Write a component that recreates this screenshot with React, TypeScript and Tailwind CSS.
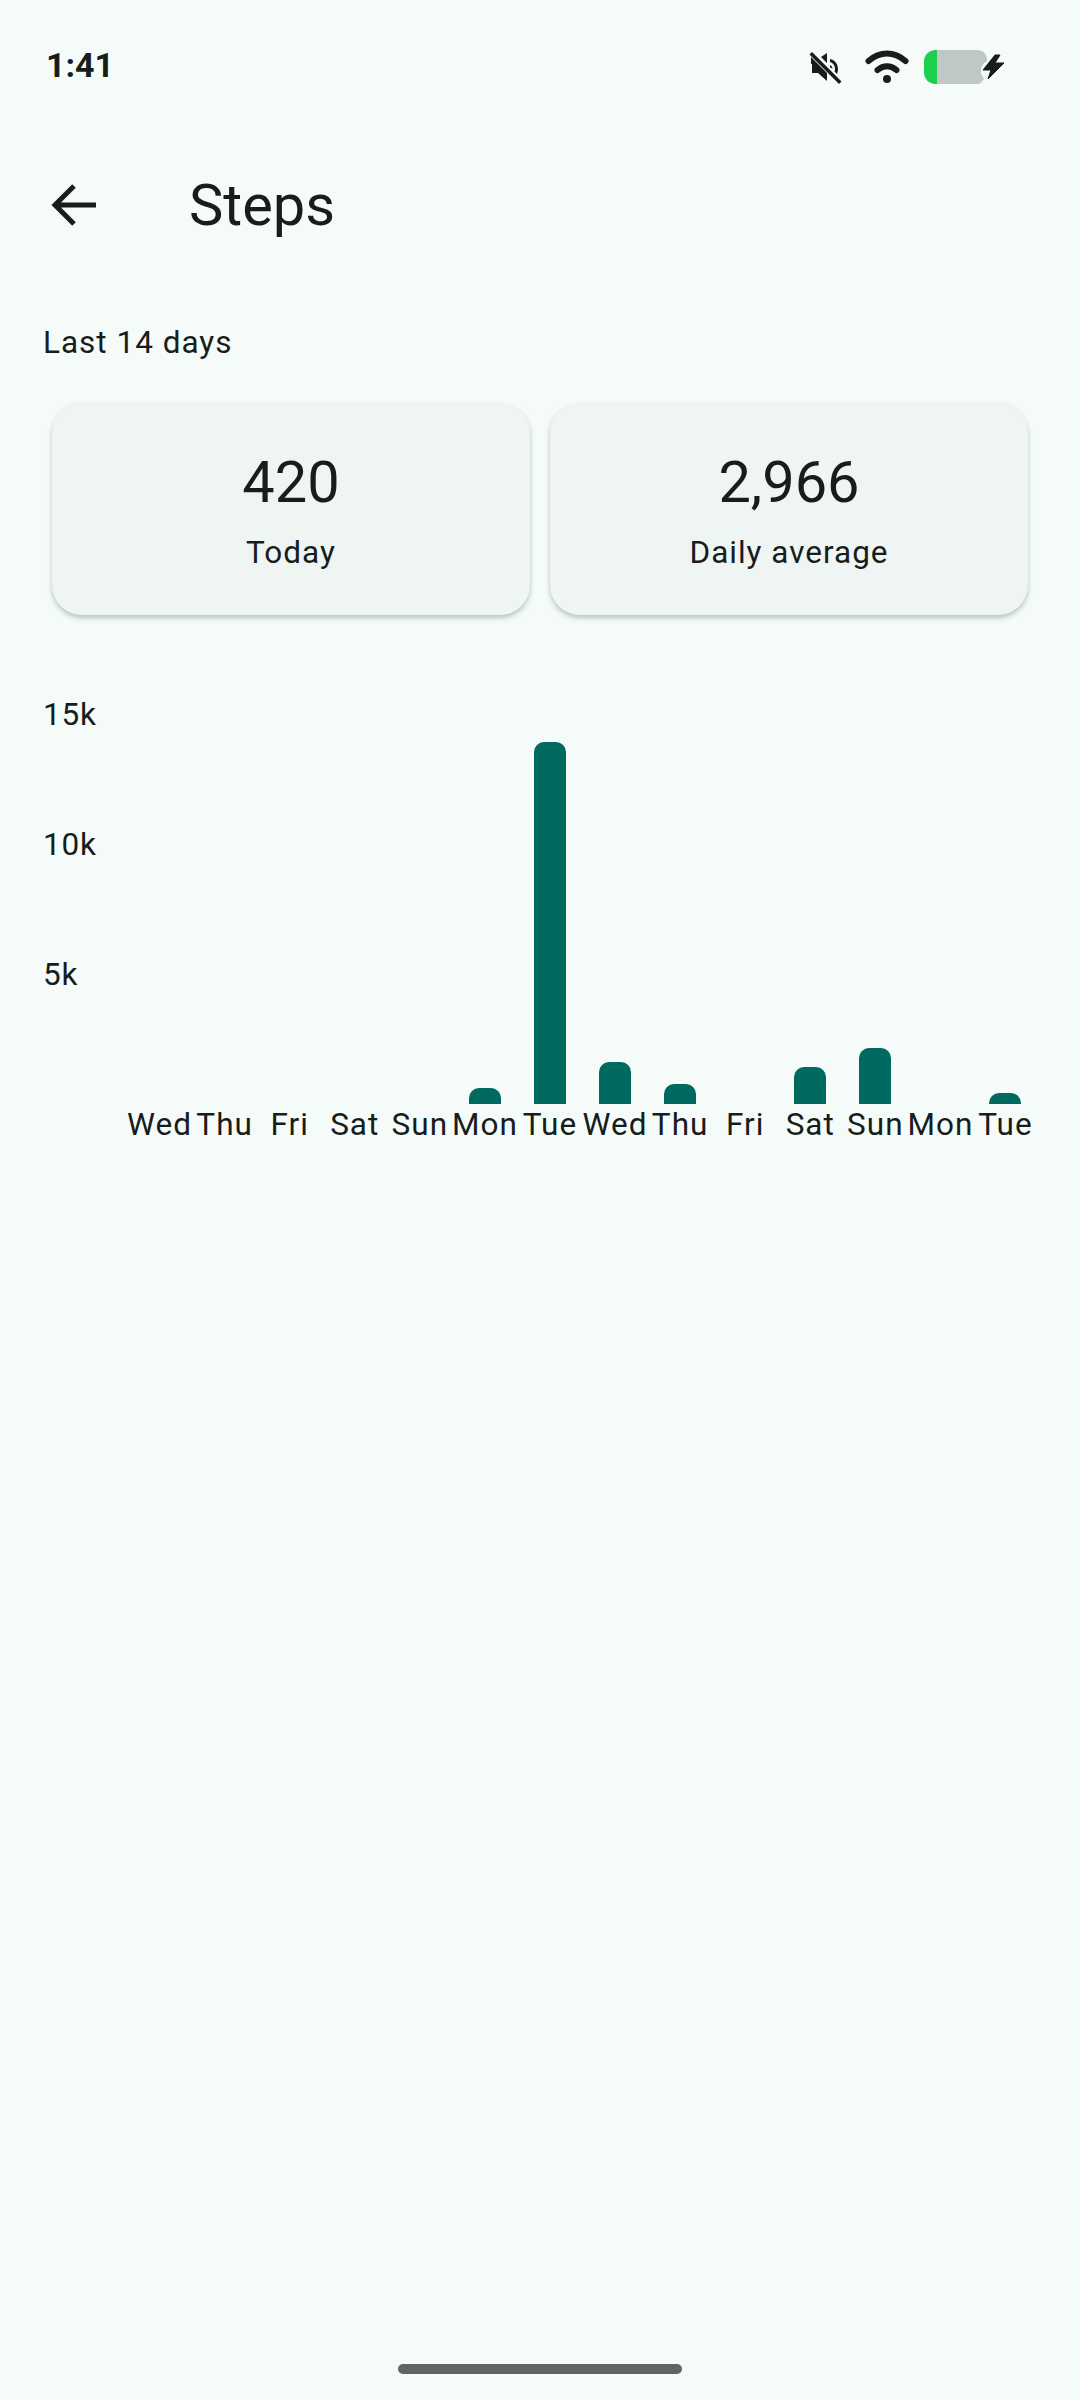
import React from 'react';

const days = [
  { label: 'Wed', height: 0 },
  { label: 'Thu', height: 0 },
  { label: 'Fri', height: 0 },
  { label: 'Sat', height: 0 },
  { label: 'Sun', height: 0 },
  { label: 'Mon', height: 16 },
  { label: 'Tue', height: 362 },
  { label: 'Wed', height: 42 },
  { label: 'Thu', height: 20 },
  { label: 'Fri', height: 0 },
  { label: 'Sat', height: 37 },
  { label: 'Sun', height: 56 },
  { label: 'Mon', height: 0 },
  { label: 'Tue', height: 11 },
];

const StatusIcons = () => (
  <div className="mt-[3px] flex items-center text-[#171d1b]">
    {/* muted speaker */}
    <svg className="mt-[2px]" width="34" height="34" viewBox="0 0 34 34" fill="currentColor">
      <path d="M2 13h7L2 6zM3 13h6l9 9v8l-9-8H3zM12 6l6-4v10z" />
      <path d="M21 8c5 1 8 5 8 10 0 2-.5 3.500-1 5l-2.500-2.500c.3-1 .5-1.700.5-2.500 0-3.500-2-6-5-7zM21 14c1.500.7 2.500 2 2.500 3.500l-2.500-1z" />
      <path d="M3 1 .5 3.500 30 33l2.500-2.500z" />
    </svg>
    {/* wifi */}
    <svg className="ml-[22px]" width="44" height="34" viewBox="0 0 44 34" fill="none" stroke="currentColor" strokeWidth="6" strokeLinecap="round">
      <path d="M3.500 11C15 1 29 1 40.500 11" />
      <path d="M12.500 20c6-5 13-5 19 0" />
      <circle cx="22" cy="29" r="4" fill="currentColor" stroke="none" />
    </svg>
    {/* battery + charging bolt */}
    <svg className="ml-[15px]" width="81" height="34" viewBox="0 0 81 34">
      <path d="M12 0h41c6 0 10 4 10 10v1a12 12 0 0 0-6 12l3 6c-2 3-4 5-7 5H12C5 34 0 29 0 22V12C0 5 5 0 12 0z" fill="#bfc8c4" />
      <path d="M13 0v34h-1C5 34 0 29 0 22V12C0 5 5 0 12 0z" fill="#1ccf4d" />
      <path d="M71 5 59 20h8l-3 9 16-16h-9l5-8z" fill="currentColor" stroke="currentColor" strokeWidth="1" strokeLinejoin="round" />
    </svg>
  </div>
);

const StatCard = ({ value, label }: { value: string; label: string }) => (
  <div className="flex h-[212px] flex-1 flex-col items-center rounded-[30px] bg-[#eff5f2] pt-[45px] shadow-[0_3px_5px_rgba(23,60,50,0.28)]">
    <span className="text-[57.75px] leading-[68px] text-[#171d1b]">{value}</span>
    <span className="mt-[17px] text-[31.5px] leading-[40px] tracking-[1px] text-[#171d1b]">{label}</span>
  </div>
);

export default function App() {
  return (
    <div className="flex h-[2400px] w-[1080px] flex-col bg-[#f5fbf8] font-['Roboto',sans-serif] text-[#171d1b]">
      {/* status bar */}
      <div className="flex h-[130px] shrink-0 items-center justify-between pl-[46px] pr-[75px]">
        <span className="text-[34px] font-bold leading-none">1:41</span>
        <StatusIcons />
      </div>

      {/* top app bar */}
      <div className="flex h-[191px] shrink-0 items-start pt-[41px]">
        <svg className="ml-[49px] mt-[9px]" width="50" height="50" viewBox="0 0 50 50" fill="none" stroke="currentColor" strokeWidth="5">
          <path d="M47 25H7M25 6 6 25l19 19" />
        </svg>
        <h1 className="ml-[90px] text-[57.75px] font-normal leading-[68px]">Steps</h1>
      </div>

      <p className="ml-[43px] text-[31.5px] leading-[44px] tracking-[1px]">Last 14 days</p>

      <div className="ml-[52px] mr-[52px] mt-[38px] flex gap-[20px]">
        <StatCard value="420" label="Today" />
        <StatCard value="2,966" label="Daily average" />
      </div>

      {/* chart */}
      <div className="ml-[43px] mr-[42px] mt-[33px] flex">
        <div className="flex w-[84px] shrink-0 flex-col pt-[2px] text-[31.5px] tracking-[0.8px]">
          <span className="flex h-[130px] items-center">15k</span>
          <span className="flex h-[130px] items-center">10k</span>
          <span className="flex h-[130px] items-center">5k</span>
        </div>
        <div className="grid flex-1 grid-cols-14">
          {days.map((day, i) => (
            <div key={i} className="flex flex-col items-center">
              <div className="flex h-[456px] items-end">
                {day.height > 0 && (
                  <div className="w-[32px] rounded-t-[10px] bg-[#006a60]" style={{ height: day.height }} />
                )}
              </div>
              <span className="mt-[1px] whitespace-nowrap text-[31.5px] leading-[40px] tracking-[1px]">{day.label}</span>
            </div>
          ))}
        </div>
      </div>

      {/* gesture pill */}
      <div className="mt-auto flex justify-center pb-[26px]">
        <div className="h-[10px] w-[284px] rounded-full bg-[#5f6663]" />
      </div>
    </div>
  );
}
